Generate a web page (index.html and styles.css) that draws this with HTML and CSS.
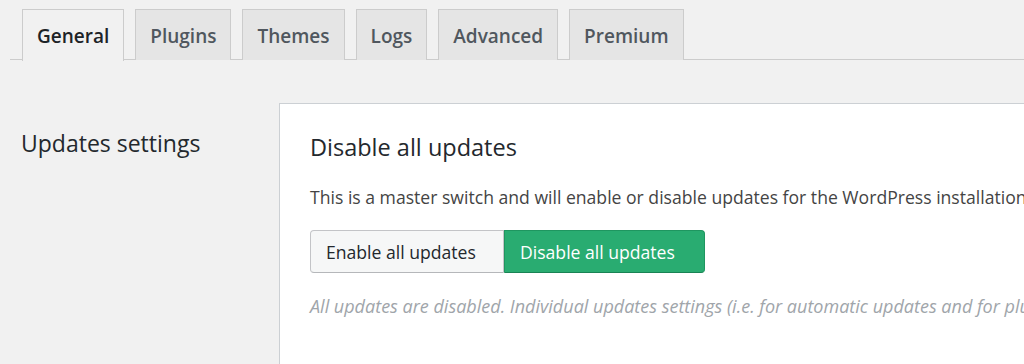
FILE: index.html
```html
<!DOCTYPE html>
<html lang="en">
<head>
  <meta charset="UTF-8" />
  <title>Updates settings</title>
  <link rel="stylesheet" href="styles.css">
</head>
<body>
  <nav class="tabs">
    <a class="tab active">General</a>
    <a class="tab">Plugins</a>
    <a class="tab">Themes</a>
    <a class="tab">Logs</a>
    <a class="tab">Advanced</a>
    <a class="tab">Premium</a>
  </nav>

  <div class="settings">
    <h2 class="section-title">Updates settings</h2>
    <div class="panel">
      <h3>Disable all updates</h3>
      <p class="desc">This is a master switch and will enable or disable updates for the WordPress installation.</p>
      <div class="switch">
        <button class="opt">Enable all updates</button>
        <button class="opt on">Disable all updates</button>
      </div>
      <p class="note">All updates are disabled. Individual updates settings (i.e. for automatic updates and for plugins, themes and core) are not available.</p>
    </div>
  </div>
</body>
</html>
```

FILE: styles.css
```css
*{box-sizing:border-box;margin:0;padding:0}
html,body{overflow:hidden}
body{background:#f1f1f1;color:#23282d;font-family:'Open Sans','Noto Sans',sans-serif;height:364px}

.tabs{display:flex;gap:11px;margin:9px 0 0 10px;padding-left:12px;border-bottom:1px solid #ccc;height:51px}
.tab{display:block;height:51px;padding:0 14px;line-height:52px;font-size:19px;font-weight:600;color:#50575e;background:#e5e5e5;border:1px solid #ccc;border-bottom:none}
.tab.active{background:#f1f1f1;color:#1d2327;height:52px}

.settings{display:flex;align-items:flex-start;margin-top:43px}
.section-title{flex:none;width:279px;padding:24px 0 0 21px;font-size:23px;font-weight:500;color:#23282d;white-space:nowrap}
.panel{flex:1;min-width:0;overflow:hidden;background:#fff;border:1px solid #ccd0d4;border-right:none;padding:28px 0 60px 30px;white-space:nowrap;min-height:300px}
.panel h3{font-size:23.5px;font-weight:500;color:#23282d;line-height:30px}
.desc{margin-top:22px;font-size:17.6px;color:#444;line-height:26px}
.switch{display:flex;margin-top:20px}
.opt{height:43px;font-family:inherit;font-size:17.6px;padding:0 15px;border:1px solid #c3c4c7;border-bottom-color:#b5b7ba;background:#f6f7f7;color:#23282d;border-radius:4px 0 0 4px;width:194px;text-align:left}
.opt.on{background:#29ac71;border-color:#1f9660;border-bottom-color:#1a8354;color:#fff;border-radius:0 4px 4px 0;width:201px}
.note{margin-top:20px;font-size:18px;font-style:italic;color:#a0a5aa;line-height:26px}
```
